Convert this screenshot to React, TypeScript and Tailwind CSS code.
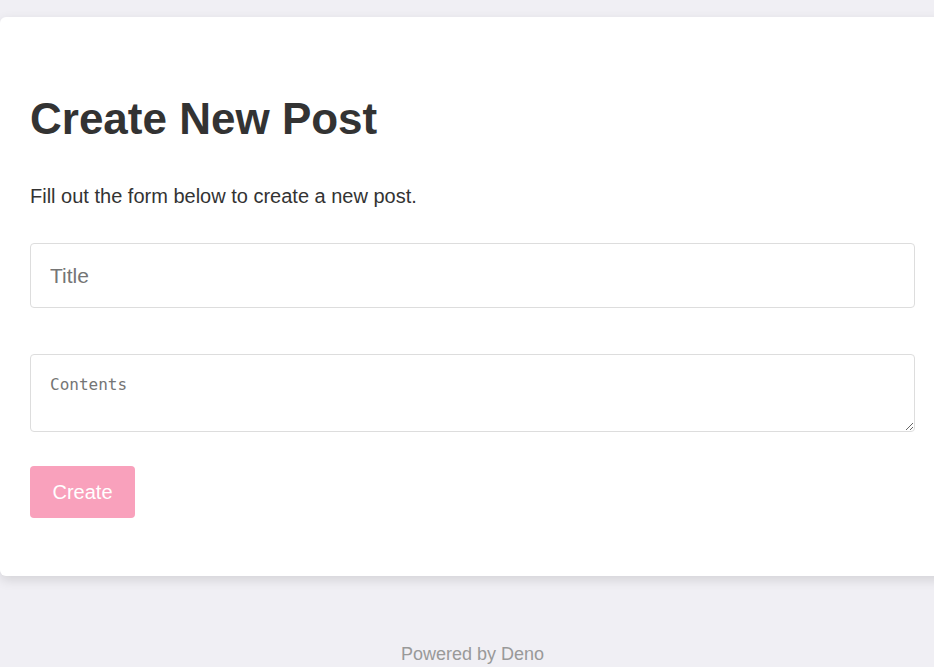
import React from "react";

export default function App() {
  return (
    <div
      className="min-h-[667px] w-full overflow-hidden bg-[#f0eff4]"
      style={{ fontFamily: '"Liberation Sans", Arial, sans-serif' }}
    >
      <div className="w-[945px]">
        <div className="pt-[17px]">
          <div className="w-[945px] rounded-[6px] bg-white pl-[30px] pr-[30px] pt-[77px] pb-[58px] shadow-[0_4px_12px_rgba(0,0,0,0.12)]">
            <h1 className="m-0 text-[44px] leading-[50px] font-bold text-[#333333]">
              Create New Post
            </h1>
            <p className="mt-[40px] text-[20px] leading-[24px] text-[#333333]">
              Fill out the form below to create a new post.
            </p>
            <form className="mt-[35px] flex flex-col">
              <input
                type="text"
                placeholder="Title"
                className="h-[65px] w-full rounded-[4px] border border-[#dddddd] px-[19px] text-[21px] text-[#333333] outline-none placeholder:text-[#757575]"
              />
              <textarea
                placeholder="Contents"
                className="mt-[46px] h-[78px] w-full rounded-[4px] border border-[#dddddd] px-[19px] pt-[20px] text-[16px] leading-[19px] text-[#333333] outline-none placeholder:text-[#757575]"
                style={{ fontFamily: '"DejaVu Sans Mono", "Liberation Mono", monospace' }}
              />
              <div className="mt-[34px]">
                <button
                  type="button"
                  className="h-[52px] w-[105px] rounded-[4px] bg-[#f9a1bc] text-[20px] text-white"
                >
                  Create
                </button>
              </div>
            </form>
          </div>
        </div>
        <footer className="pt-[67px] text-center text-[18px] leading-[22px] text-[#999999]">
          Powered by Deno
        </footer>
      </div>
    </div>
  );
}
